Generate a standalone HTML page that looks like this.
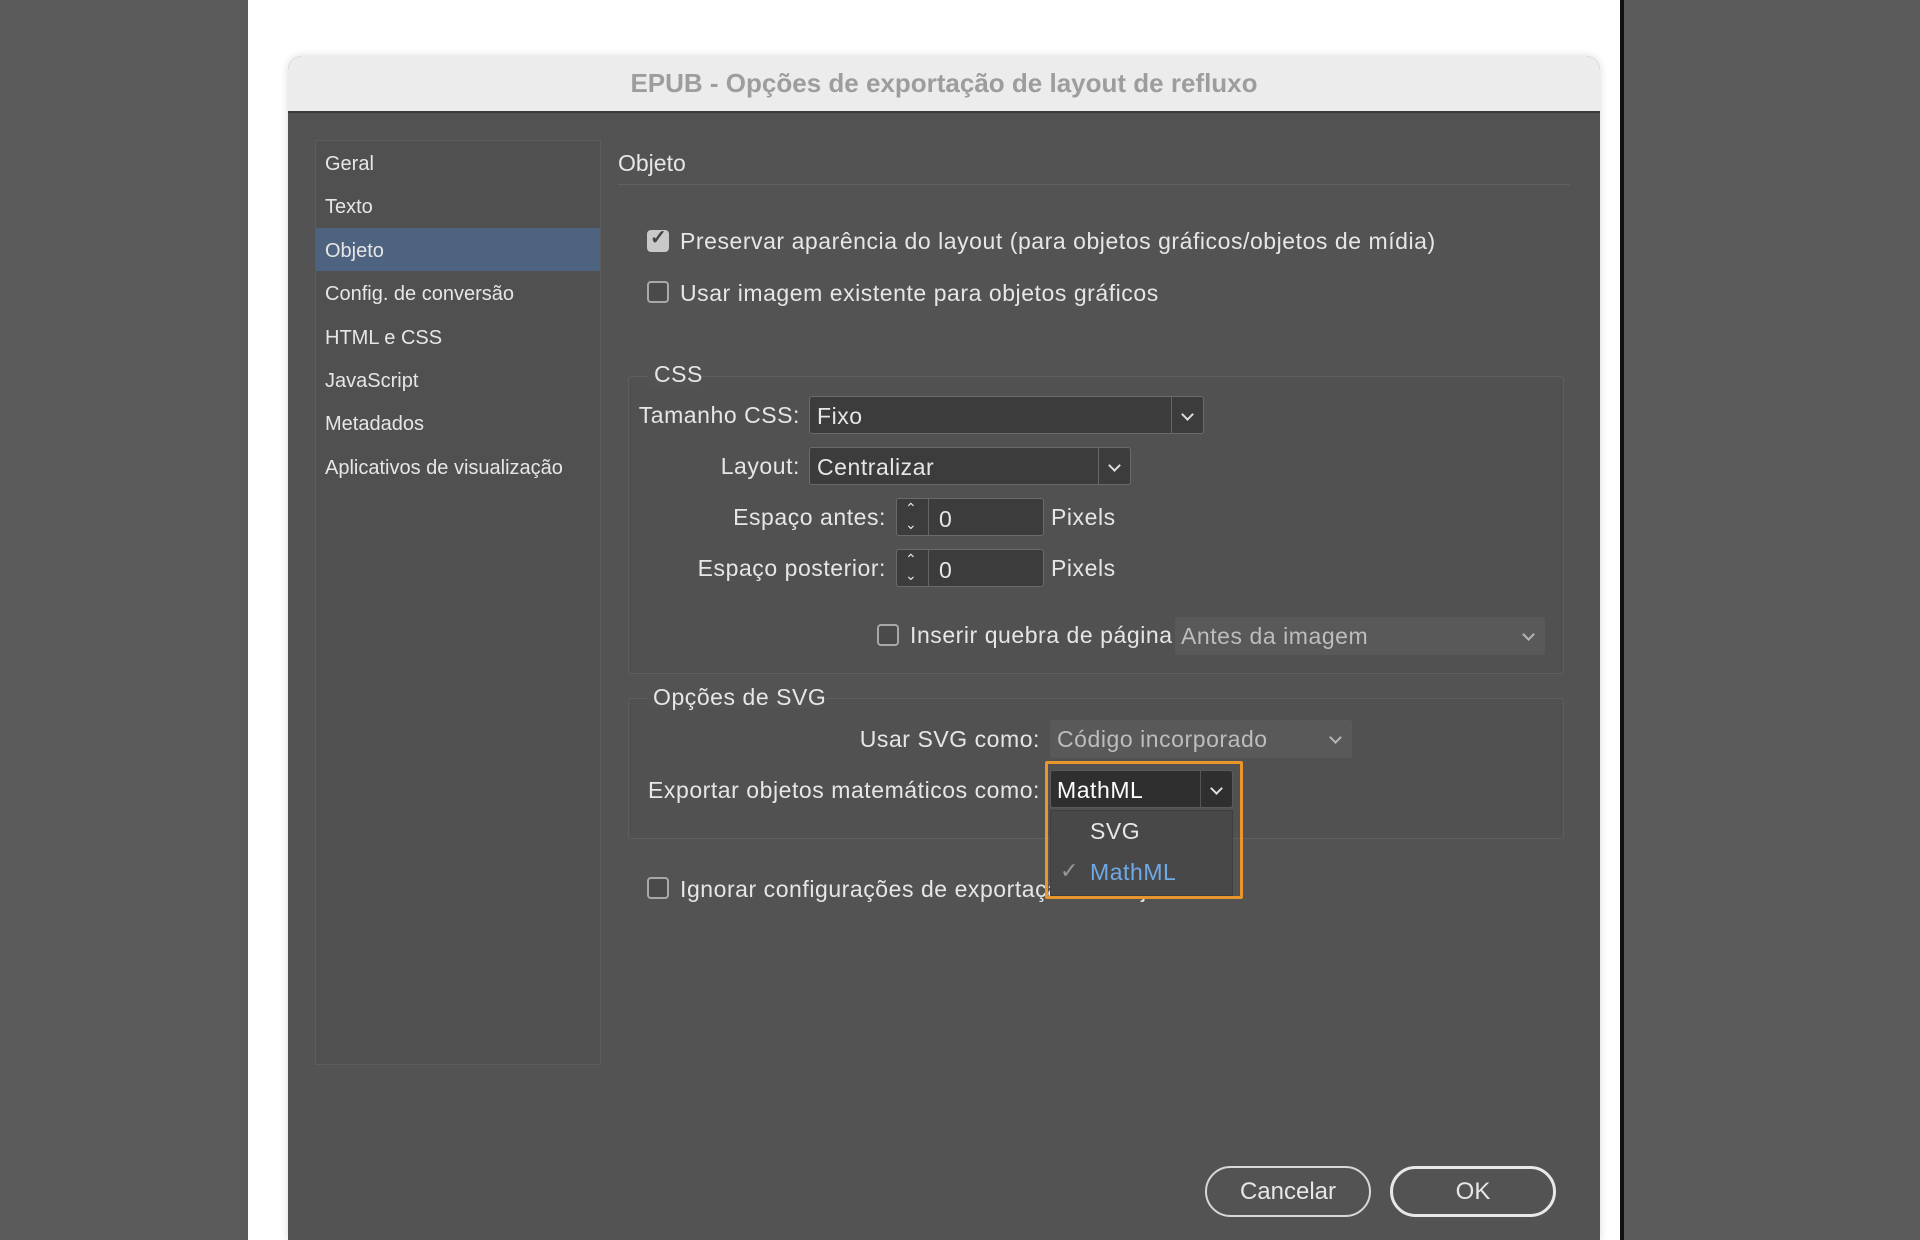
<!DOCTYPE html>
<html><head><meta charset="utf-8"><style>
*{margin:0;padding:0;box-sizing:border-box}
html,body{width:1920px;height:1240px}
body{background:#5b5b5b;position:relative;overflow:hidden;font-family:"Liberation Sans Narrow","Liberation Sans",sans-serif;color:#e6e6e6}
.a{position:absolute}
.t{position:absolute;white-space:nowrap;line-height:1}
.cb{position:absolute;width:22px;height:22px;border:2px solid #a8a8a8;border-radius:4px;background:#4a4a4a}
.dd{position:absolute;background:#3c3c3c;border:1px solid #6a6a6a;border-radius:3px}
.arr{position:absolute;top:0;bottom:0;width:32px;border-left:1px solid #666}
.arr:after{content:"";position:absolute;left:11px;top:13px;width:7px;height:7px;border-right:2px solid #ddd;border-bottom:2px solid #ddd;transform:rotate(45deg)}
.sp{position:absolute;background:#3c3c3c;border:1px solid #6a6a6a;border-radius:3px}
.sp .s{position:absolute;left:0;top:0;bottom:0;width:32px;border-right:1px solid #666}
.lbl{font-size:23px;letter-spacing:0.55px}
</style></head><body>
<div class="a" style="left:248px;top:0;width:1374px;height:1240px;background:#fff"></div>
<div class="a" style="left:1620px;top:0;width:4px;height:1240px;background:#111"></div>
<div class="a" style="left:288px;top:56px;width:1312px;height:1184px;background:#535353;border-radius:14px 14px 0 0;overflow:hidden;box-shadow:0 0 8px rgba(0,0,0,.15)">
 <div class="a" style="left:0;top:0;width:1312px;height:57px;background:#ececec;border-bottom:2px solid #3a3a3a"></div>
 <div class="t" style="left:0;width:1312px;text-align:center;top:14px;font-size:26px;font-weight:bold;color:#9d9d9d">EPUB - Opções de exportação de layout de refluxo</div>
</div>
<!-- sidebar -->
<div class="a" style="left:315px;top:140px;width:286px;height:925px;background:#505050;border:1px solid #5c5c5c"></div>
<div class="a" style="left:316px;top:228px;width:284px;height:43px;background:#4d6380"></div>
<div class="t" style="left:325px;top:154px;font-size:20px">Geral</div>
<div class="t" style="left:325px;top:197px;font-size:20px">Texto</div>
<div class="t" style="left:325px;top:241px;font-size:20px">Objeto</div>
<div class="t" style="left:325px;top:284px;font-size:20px">Config. de conversão</div>
<div class="t" style="left:325px;top:328px;font-size:20px">HTML e CSS</div>
<div class="t" style="left:325px;top:371px;font-size:20px">JavaScript</div>
<div class="t" style="left:325px;top:414px;font-size:20px">Metadados</div>
<div class="t" style="left:325px;top:458px;font-size:20px">Aplicativos de visualização</div>
<!-- right -->
<div class="t" style="left:618px;top:152px;font-size:23px">Objeto</div>
<div class="a" style="left:618px;top:184px;width:952px;height:1px;background:#606060"></div>
<div class="cb" style="left:647px;top:230px;background:#c9c9c9;border-color:#c9c9c9"></div>
<div class="t" style="left:650px;top:228px;font-size:20px;color:#444;font-weight:bold">✓</div>
<div class="t lbl" style="left:680px;top:230px">Preservar aparência do layout (para objetos gráficos/objetos de mídia)</div>
<div class="cb" style="left:647px;top:281px"></div>
<div class="t lbl" style="left:680px;top:282px">Usar imagem existente para objetos gráficos</div>
<!-- CSS group -->
<div class="a" style="left:628px;top:376px;width:936px;height:298px;border:1px solid #5e5e5e;border-radius:3px;background:#515151"></div>
<div class="a" style="left:648px;top:362px;width:52px;height:24px;background:#535353"></div>
<div class="t lbl" style="left:654px;top:363px">CSS</div>
<div class="t lbl" style="left:500px;width:300px;text-align:right;top:404px">Tamanho CSS:</div>
<div class="dd" style="left:809px;top:396px;width:395px;height:38px"><div class="t lbl" style="left:7px;top:8px">Fixo</div><div class="arr" style="right:0"></div></div>
<div class="t lbl" style="left:500px;width:300px;text-align:right;top:455px">Layout:</div>
<div class="dd" style="left:809px;top:447px;width:322px;height:38px"><div class="t lbl" style="left:7px;top:8px">Centralizar</div><div class="arr" style="right:0"></div></div>
<div class="t lbl" style="left:500px;width:386px;text-align:right;top:506px">Espaço antes:</div>
<div class="sp" style="left:896px;top:498px;width:148px;height:38px"><div class="s"><div class="t" style="left:8px;top:2px;font-size:14px">&#8963;</div><div class="t" style="left:8px;top:18px;font-size:14px">&#8964;</div></div><div class="t lbl" style="left:42px;top:9px">0</div></div>
<div class="t lbl" style="left:1051px;top:506px">Pixels</div>
<div class="t lbl" style="left:500px;width:386px;text-align:right;top:557px">Espaço posterior:</div>
<div class="sp" style="left:896px;top:549px;width:148px;height:38px"><div class="s"><div class="t" style="left:8px;top:2px;font-size:14px">&#8963;</div><div class="t" style="left:8px;top:18px;font-size:14px">&#8964;</div></div><div class="t lbl" style="left:42px;top:9px">0</div></div>
<div class="t lbl" style="left:1051px;top:557px">Pixels</div>
<div class="cb" style="left:877px;top:624px"></div>
<div class="t lbl" style="left:910px;top:624px">Inserir quebra de página</div>
<div class="a" style="left:1175px;top:617px;width:370px;height:38px;background:#595959;border-radius:3px"><div class="t lbl" style="left:6px;top:8px;color:#bdbdbd">Antes da imagem</div><div class="arr" style="right:0;border:none;opacity:.7"></div></div>
<!-- SVG group -->
<div class="a" style="left:628px;top:698px;width:936px;height:141px;border:1px solid #5e5e5e;border-radius:3px;background:#515151"></div>
<div class="a" style="left:648px;top:684px;width:172px;height:24px;background:#535353"></div>
<div class="t lbl" style="left:653px;top:686px">Opções de SVG</div>
<div class="t lbl" style="left:700px;width:340px;text-align:right;top:728px">Usar SVG como:</div>
<div class="a" style="left:1050px;top:720px;width:302px;height:38px;background:#595959;border-radius:3px"><div class="t lbl" style="left:7px;top:8px;color:#bdbdbd">Código incorporado</div><div class="arr" style="right:0;border:none;opacity:.7"></div></div>
<div class="t lbl" style="left:600px;width:440px;text-align:right;top:779px">Exportar objetos matemáticos como:</div>
<div class="cb" style="left:647px;top:877px"></div>
<div class="t lbl" style="left:680px;top:878px">Ignorar configurações de exportação do objeto</div>
<div class="a" style="left:1050px;top:770px;width:183px;height:38px;background:#2f2f2f;border:1px solid #5a5a5a;border-radius:3px"><div class="t lbl" style="left:6px;top:8px;color:#fff">MathML</div><div class="arr" style="right:0;border-left-color:#555"></div></div>
<div class="a" style="left:1050px;top:810px;width:183px;height:86px;background:#484848;border:1px solid #3e3e3e"></div>
<div class="t lbl" style="left:1090px;top:820px">SVG</div>
<div class="t" style="left:1060px;top:860px;font-size:22px;color:#999">✓</div>
<div class="t lbl" style="left:1090px;top:861px;color:#6fa9e6">MathML</div>
<div class="a" style="left:1045px;top:761px;width:198px;height:138px;border:3px solid #e8952c;border-radius:2px"></div>
<!-- buttons -->
<div class="a" style="left:1205px;top:1166px;width:166px;height:51px;border:2px solid #d8d8d8;border-radius:26px"></div>
<div class="t" style="left:1205px;width:166px;text-align:center;top:1180px;font-size:24px">Cancelar</div>
<div class="a" style="left:1390px;top:1166px;width:166px;height:51px;border:3px solid #e8e8e8;border-radius:26px"></div>
<div class="t" style="left:1390px;width:166px;text-align:center;top:1180px;font-size:24px">OK</div>
</body></html>
